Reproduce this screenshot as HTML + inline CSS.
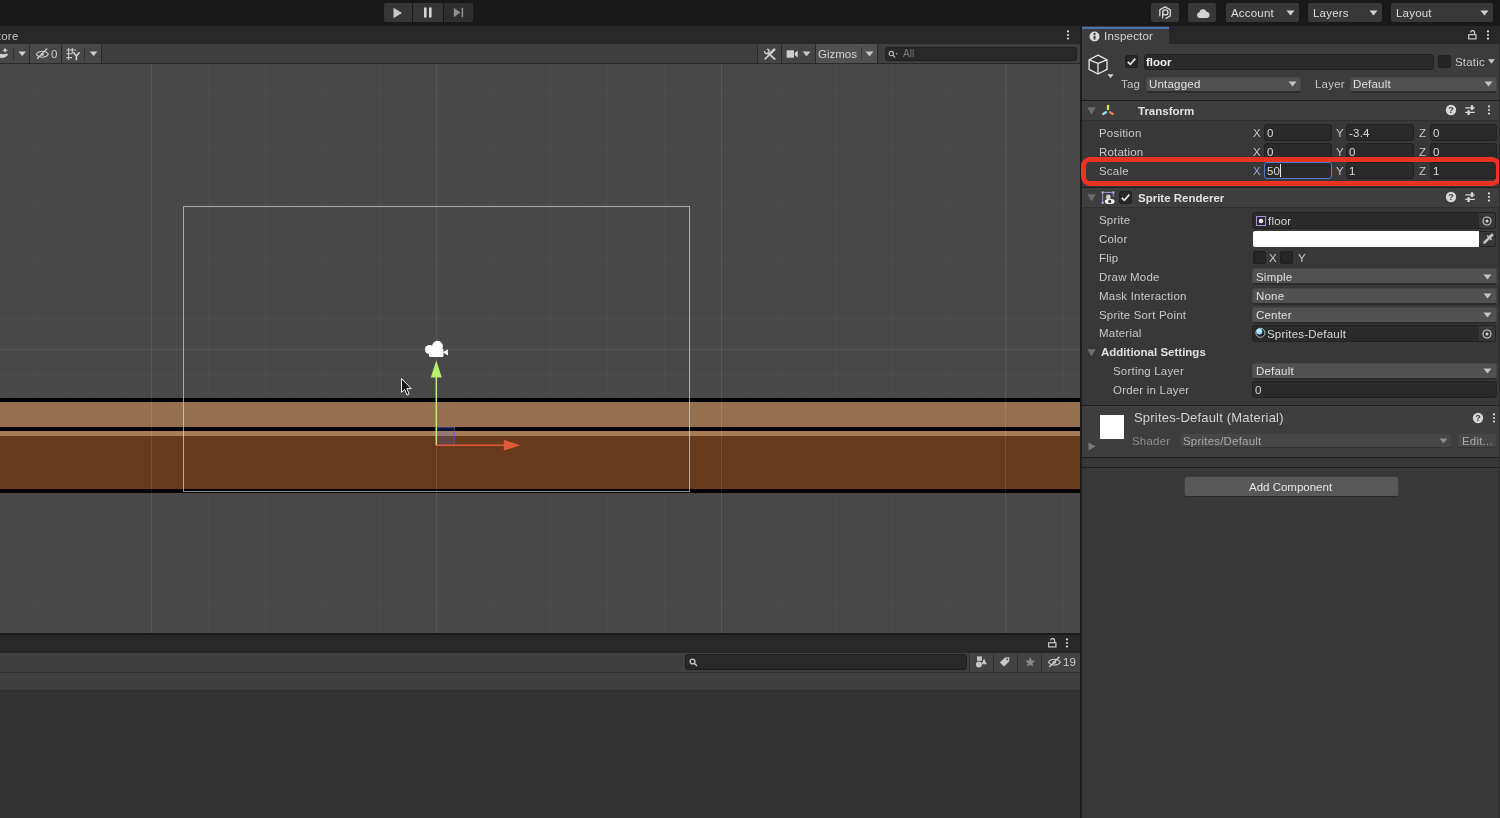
<!DOCTYPE html>
<html><head><meta charset="utf-8"><title>Unity - Inspector</title>
<style>
*{box-sizing:border-box;margin:0;padding:0}
html,body{width:1500px;height:818px;overflow:hidden;background:#191919}
body{position:relative;font-family:"Liberation Sans",sans-serif;font-size:12px;color:#d2d2d2;line-height:1}
.a{position:absolute}
.t{position:absolute;white-space:nowrap;line-height:14px;font-size:11.5px;letter-spacing:0.2px}
.fld{position:absolute;background:#2a2a2a;border:1px solid #212121;border-radius:3px}
.dd{position:absolute;background:#515151;border:1px solid #474747;border-bottom:2px solid #2c2c2c;border-radius:3px}
.btn{position:absolute;background:#383838;border-radius:2px}
svg{position:absolute;overflow:visible}
#root{position:absolute;left:0;top:0;width:1500px;height:818px;will-change:transform}
</style></head><body><div id="root">
<!-- TOPBAR -->
<div class="a" id="topbar" style="left:0;top:0;width:1500px;height:26px;background:#191919">
<div class="btn" style="left:384px;top:3px;width:28px;height:19px;background:#363636;border-radius:2px 0 0 2px"></div>
<div class="btn" style="left:413px;top:3px;width:30px;height:19px;background:#363636;border-radius:0"></div>
<div class="btn" style="left:444px;top:3px;width:29px;height:19px;background:#2e2e2e;border-radius:0 2px 2px 0"></div>
<svg style="left:392px;top:7px" width="12" height="12" viewBox="0 0 12 12"><path d="M1.5 0.8 L10 6 L1.5 11.2 Z" fill="#c8c8c8"/></svg>
<svg style="left:423px;top:7px" width="10" height="11" viewBox="0 0 10 11"><rect x="1" y="0.5" width="2.6" height="10" fill="#d4d4d4"/><rect x="6" y="0.5" width="2.6" height="10" fill="#d4d4d4"/></svg>
<svg style="left:453px;top:7px" width="12" height="11" viewBox="0 0 12 11"><path d="M0.8 0.8 L7.5 5.5 L0.8 10.2 Z" fill="#8e8e8e"/><rect x="8.6" y="0.8" width="1.5" height="9.4" fill="#8e8e8e"/></svg>
<div class="btn" style="left:1151px;top:3px;width:28px;height:19px"></div>
<div class="btn" style="left:1188px;top:3px;width:28px;height:19px"></div>
<div class="btn" style="left:1226px;top:3px;width:73px;height:19px"></div>
<div class="btn" style="left:1308px;top:3px;width:74px;height:19px"></div>
<div class="btn" style="left:1391px;top:3px;width:102px;height:19px"></div>
<div class="t" style="left:1231px;top:6px;color:#dcdcdc">Account</div>
<div class="t" style="left:1313px;top:6px;color:#dcdcdc">Layers</div>
<div class="t" style="left:1396px;top:6px;color:#dcdcdc">Layout</div>
<svg style="left:1286px;top:10px" width="9" height="6" viewBox="0 0 9 6"><path d="M0.5 0.5 H8.5 L4.5 5.5 Z" fill="#d0d0d0"/></svg>
<svg style="left:1369px;top:10px" width="9" height="6" viewBox="0 0 9 6"><path d="M0.5 0.5 H8.5 L4.5 5.5 Z" fill="#d0d0d0"/></svg>
<svg style="left:1480px;top:10px" width="9" height="6" viewBox="0 0 9 6"><path d="M0.5 0.5 H8.5 L4.5 5.5 Z" fill="#d0d0d0"/></svg>
<svg style="left:1157px;top:5px" width="16" height="16" viewBox="1157 5 16 16" fill="none" stroke="#d8d8d8" stroke-width="1.25" stroke-linejoin="round"><path d="M1159.8 16.2 V9.9 L1165 6.9 L1170.3 9.9 V15.9 L1165.6 18.6"/><circle cx="1165.3" cy="12.4" r="2.6"/><path d="M1162.7 12.4 V18.4"/></svg>
<svg style="left:1195.5px;top:8.6px" width="14.3" height="9.4" viewBox="0 1.5 16 10.5"><path d="M4 11.5 a3.2 3.2 0 0 1 -0.4 -6.3 a4.3 4.3 0 0 1 8.2 -0.6 a3.5 3.5 0 0 1 0.6 6.9 Z" fill="#d2d2d2"/></svg>
</div>
<!-- SCENE PANEL -->
<div class="a" id="scenetab" style="left:0;top:26px;width:1080px;height:18px;background:#282828"></div>
<div class="t" style="left:-10px;top:29px;color:#c4c4c4">Store</div>
<svg style="left:1065.6px;top:29.2px" width="4" height="12" viewBox="0 0 4 12" fill="#d6d6d6"><circle cx="2" cy="2.4" r="1.1"/><circle cx="2" cy="6" r="1.1"/><circle cx="2" cy="9.6" r="1.1"/></svg>
<div class="a" id="scenetool" style="left:0;top:44px;width:1080px;height:20px;background:#3e3e3e;border-bottom:1px solid #2a2a2a"></div>
<div class="a" style="left:0;top:44px;width:101px;height:19px;background:#484848"></div>
<div class="a" style="left:29px;top:44px;width:1px;height:19px;background:#2a2a2a"></div>
<div class="a" style="left:61px;top:44px;width:1px;height:19px;background:#2a2a2a"></div>
<div class="a" style="left:101px;top:44px;width:1px;height:19px;background:#2a2a2a"></div>
<svg style="left:0;top:44px" width="110" height="20" viewBox="0 44 110 20">
<path d="M13.5 48 V60 M84.5 48 V60" stroke="#333333" stroke-width="1" fill="none"/>
<path d="M5.1 47.4 L6 49.5 L8.1 50.3 L6 51.1 L5.1 53.2 L4.2 51.1 L2.1 50.3 L4.2 49.5 Z" fill="#d0d0d0"/>
<path d="M-2 52.8 C0.5 54.6 3.5 54.6 7.6 53.4 L7.6 55.6 C4 58.6 0.5 58.6 -2 57 Z" fill="#d0d0d0"/>
<path d="M18.4 51.5 H26 L22.2 55.9 Z M89.8 51.5 H97.4 L93.6 55.9 Z" fill="#d0d0d0"/>
<path d="M36.3 54.3 C38.8 50.2 45.8 50.2 48.4 54.3 C45.8 58.2 38.8 58.2 36.3 54.3 Z" fill="none" stroke="#cacaca" stroke-width="1.1"/>
<circle cx="42.3" cy="54.3" r="1.5" fill="#cacaca"/>
<path d="M37.2 58.8 L47.2 48.5" stroke="#cacaca" stroke-width="1.3" fill="none"/>
<path d="M66.3 50 H76 M66.3 53.8 H72.5 M66.3 57.6 H72 M68.6 48 V60 M72.3 48 V53" stroke="#cacaca" stroke-width="1.1" fill="none"/>
<path d="M73.3 52.2 L76.4 56 L79.5 52.2 M76.4 56 V60.2" stroke="#d6d6d6" stroke-width="1.5" fill="none"/>
</svg>
<div class="t" style="left:51px;top:47px;color:#cacaca">0</div>
<div class="a" style="left:757px;top:44px;width:58px;height:19px;background:#444444"></div>
<div class="a" style="left:815px;top:44px;width:62px;height:19px;background:#505050"></div>
<div class="a" style="left:757px;top:44px;width:1px;height:19px;background:#2a2a2a"></div>
<div class="a" style="left:781px;top:44px;width:1px;height:19px;background:#2a2a2a"></div>
<div class="a" style="left:815px;top:44px;width:1px;height:19px;background:#2a2a2a"></div>
<div class="a" style="left:877px;top:44px;width:1px;height:19px;background:#2a2a2a"></div>
<svg style="left:763px;top:47px" width="14" height="14" viewBox="763 47 14 14" fill="none" stroke="#cccccc" stroke-linecap="round"><path d="M768.2 53 L774.6 59" stroke-width="1.9"/><path d="M767.6 49.2 a2.3 2.3 0 1 1 -3 2.6" stroke-width="1.5"/><path d="M765.2 58.8 L770.6 53.4" stroke-width="1.7"/><path d="M771.2 52.6 L774.2 49.6" stroke-width="2.6"/></svg>
<svg style="left:786px;top:49px" width="13" height="10" viewBox="786 49 13 10" fill="#cccccc"><rect x="786.6" y="50.2" width="7.4" height="7.5" rx="0.7"/><path d="M794.8 52.7 L797.9 50.4 V57.5 L794.8 55.2 Z"/></svg>
<svg style="left:802px;top:51px" width="9" height="6" viewBox="0 0 9 6"><path d="M0.5 0.5 H8.5 L4.5 5.5 Z" fill="#c4c4c4"/></svg>
<div class="t" style="left:818px;top:47px;color:#d2d2d2;letter-spacing:0">Gizmos</div>
<div class="a" style="left:861px;top:47px;width:1px;height:13px;background:#3a3a3a"></div>
<svg style="left:865px;top:51px" width="9" height="6" viewBox="0 0 9 6"><path d="M0.5 0.5 H8.5 L4.5 5.5 Z" fill="#c4c4c4"/></svg>
<div class="a" style="left:885px;top:47px;width:192px;height:14px;background:#282828;border:1px solid #1f1f1f;border-radius:3px"></div>
<svg style="left:888px;top:50px" width="11" height="9" viewBox="0 0 11 9" fill="none" stroke="#b8b8b8" stroke-width="1.15"><circle cx="3.3" cy="3.5" r="2.2"/><path d="M5 5.2 L7.2 7.6"/><path d="M7.4 3.2 H10 L8.7 4.8 Z" fill="#b8b8b8" stroke="none"/></svg>
<div class="t" style="left:903px;top:47px;color:#7a7a7a;font-size:10px;letter-spacing:0">All</div>
<div class="a" id="scene" style="left:0;top:64px;width:1080px;height:569px;background:#484848;overflow:hidden"><div class="a" style="left:0;top:0;width:1080px;height:569px;background-image:repeating-linear-gradient(90deg,rgba(255,255,255,0.016) 0 1px,transparent 1px 28.5px),repeating-linear-gradient(0deg,rgba(255,255,255,0.016) 0 1px,transparent 1px 28.5px);background-position:8.5px 0,0 -0.5px"></div><div class="a" style="left:151px;top:0;width:1px;height:569px;background:rgba(255,255,255,0.07)"></div><div class="a" style="left:436px;top:0;width:1px;height:569px;background:rgba(255,255,255,0.07)"></div><div class="a" style="left:721px;top:0;width:1px;height:569px;background:rgba(255,255,255,0.07)"></div><div class="a" style="left:1005px;top:0;width:1px;height:569px;background:rgba(255,255,255,0.07)"></div><div class="a" style="left:0;top:285px;width:1080px;height:1px;background:rgba(255,255,255,0.07)"></div><div class="a" style="left:0;top:334px;width:1080px;height:4px;background:#000000"></div><div class="a" style="left:0;top:338px;width:1080px;height:25px;background:#94704e"></div><div class="a" style="left:0;top:363px;width:1080px;height:4px;background:#000000"></div><div class="a" style="left:0;top:367px;width:1080px;height:5px;background:#a47c56"></div><div class="a" style="left:0;top:372px;width:1080px;height:53px;background:#673a1c"></div><div class="a" style="left:0;top:425px;width:1080px;height:3.5px;background:#000000"></div><div class="a" style="left:151px;top:334px;width:1px;height:95px;background:rgba(255,255,255,0.10)"></div><div class="a" style="left:436px;top:334px;width:1px;height:95px;background:rgba(255,255,255,0.10)"></div><div class="a" style="left:721px;top:334px;width:1px;height:95px;background:rgba(255,255,255,0.10)"></div><div class="a" style="left:1005px;top:334px;width:1px;height:95px;background:rgba(255,255,255,0.10)"></div><div class="a" style="left:183px;top:142px;width:507px;height:286px;border:1px solid rgba(230,230,230,0.62)"></div><div class="a" style="left:437px;top:363px;width:18px;height:18px;background:rgba(90,100,220,0.22);border:1px solid rgba(80,90,200,0.55);border-left:none;border-bottom:none"></div><svg style="left:0;top:0" width="1080" height="569" viewBox="0 64 1080 569"><path d="M436.3 445.5 V376" stroke="#bcf06c" stroke-width="1.5" fill="none"/><path d="M436.3 360.5 L441.8 377.5 H430.8 Z" fill="#b8ee6c"/><path d="M436 445.3 H504" stroke="#e25a3a" stroke-width="1.6" fill="none"/><path d="M520.5 445.2 L503.8 450.6 V439.8 Z" fill="#e25a3a"/><g fill="#ffffff"><circle cx="429.5" cy="349.5" r="4.6"/><circle cx="437.5" cy="346.2" r="5.4"/><rect x="429" y="348.5" width="14.5" height="8.6" rx="1.5"/><path d="M443 352.3 L447.9 349.2 V355.6 Z"/></g><path d="M401.5 378.5 V392.3 L404.6 389.4 L407 395 L409.2 394 L406.8 388.6 H411.2 Z" fill="#1a1a1a" stroke="#f0f0f0" stroke-width="1" stroke-linejoin="round"/></svg></div>
<div class="a" style="left:0;top:633px;width:1080px;height:2px;background:#191919"></div>
<div class="a" id="bottab" style="left:0;top:635px;width:1080px;height:18px;background:#282828"></div>
<svg style="left:1047.6px;top:638.3px" width="8.6" height="9.6" viewBox="0 0 9 10" fill="none" stroke="#d2d2d2" stroke-width="1.2"><rect x="0.7" y="4.9" width="7.6" height="4.4"/><path d="M6.9 4.9 V2.9 a2.1 2.1 0 0 0 -4.2 -0.3"/></svg>
<svg style="left:1065.4px;top:637.4px" width="4" height="12" viewBox="0 0 4 12" fill="#d6d6d6"><circle cx="2" cy="2.4" r="1.1"/><circle cx="2" cy="6" r="1.1"/><circle cx="2" cy="9.6" r="1.1"/></svg>
<div class="a" id="bottool" style="left:0;top:653px;width:1080px;height:19px;background:#3f3f3f"></div>
<div class="a" style="left:685px;top:654px;width:282px;height:16px;background:#282828;border:1px solid #1f1f1f;border-radius:3px"></div>
<svg style="left:689px;top:658px" width="9" height="9" viewBox="0 0 9 9" fill="none" stroke="#c8c8c8" stroke-width="1.4"><circle cx="3.5" cy="3.5" r="2.4"/><path d="M5.3 5.3 L8 8"/></svg>
<div class="a" style="left:969px;top:653px;width:111px;height:19px;background:#434343"></div>
<svg style="left:960px;top:653px" width="120" height="19" viewBox="960 653 120 19">
<path d="M969.5 653 V672 M993.5 653 V672 M1017.5 653 V672 M1041.5 653 V672" stroke="#303030" stroke-width="1" fill="none"/>
<rect x="977" y="656.4" width="4.9" height="4.4" fill="#c6c6c6"/><circle cx="978.9" cy="664.5" r="3" fill="#c6c6c6"/><path d="M984 658.6 L986.8 664.2 H981.4 Z" fill="#c6c6c6"/>
<path d="M999.8 662.6 L1005 657.6 L1009.4 657.2 L1009.2 661.4 L1004 666.4 Z" fill="#c6c6c6"/><circle cx="1007.3" cy="659.3" r="0.9" fill="#434343"/>
<path d="M1030.2 657 L1031.7 660.4 L1035.2 660.7 L1032.5 663.1 L1033.3 666.6 L1030.2 664.8 L1027.1 666.6 L1027.9 663.1 L1025.2 660.7 L1028.7 660.4 Z" fill="#8a8a8a"/>
<path d="M1048.4 662.2 C1050.9 658.2 1057.9 658.2 1060.4 662.2 C1057.9 666 1050.9 666 1048.4 662.2 Z" fill="none" stroke="#cacaca" stroke-width="1.1"/><circle cx="1054.4" cy="662.2" r="1.5" fill="#cacaca"/><path d="M1049.2 667 L1059.4 656.8" stroke="#cacaca" stroke-width="1.3" fill="none"/>
</svg>
<div class="t" style="left:1063px;top:655px;color:#cacaca">19</div>
<div class="a" id="botbar" style="left:0;top:672px;width:1080px;height:19px;background:#3f3f3f;border-top:1px solid #303030;border-bottom:1px solid #2c2c2c"></div>
<div class="a" id="botcontent" style="left:0;top:691px;width:1080px;height:127px;background:#333333"></div>
<!-- INSPECTOR -->
<div class="a" style="left:1080px;top:26px;width:2px;height:792px;background:#1c1c1c"></div>
<div class="a" id="insptab" style="left:1082px;top:26px;width:418px;height:18px;background:#282828"></div>
<div class="a" style="left:1082px;top:26px;width:87px;height:18px;background:#3c3c3c"></div><div class="a" style="left:1082px;top:27px;width:87px;height:2px;background:#4a76ad"></div>
<svg style="left:1089px;top:31px" width="11" height="11" viewBox="0 0 11 11"><circle cx="5.5" cy="5.5" r="5" fill="#dcdcdc"/><rect x="4.6" y="4.6" width="1.9" height="4" fill="#3c3c3c"/><circle cx="5.5" cy="2.9" r="1.1" fill="#3c3c3c"/></svg>
<div class="t" style="left:1104px;top:29px;color:#d6d6d6">Inspector</div>
<svg style="left:1467.6px;top:30.2px" width="8.6" height="9.6" viewBox="0 0 9 10" fill="none" stroke="#d2d2d2" stroke-width="1.2"><rect x="0.7" y="4.9" width="7.6" height="4.4"/><path d="M6.9 4.9 V2.9 a2.1 2.1 0 0 0 -4.2 -0.3"/></svg>
<svg style="left:1485.8px;top:29.2px" width="4" height="12" viewBox="0 0 4 12" fill="#d6d6d6"><circle cx="2" cy="2.4" r="1.1"/><circle cx="2" cy="6" r="1.1"/><circle cx="2" cy="9.6" r="1.1"/></svg>
<div class="a" id="insp" style="left:1082px;top:44px;width:418px;height:774px;background:#383838"></div>
<div class="a" style="left:1082px;top:44px;width:418px;height:56px;background:#3c3c3c"></div>
<svg style="left:1088px;top:54px" width="20" height="21" viewBox="1088 54 20 21" fill="rgba(0,0,0,0.16)" stroke="#e4e4e4" stroke-width="1.35" stroke-linejoin="round"><path d="M1098 55.2 L1107 59.9 V69.4 L1098 74 L1089.1 69.4 V59.9 Z"/><path d="M1089.1 59.9 L1098 63.3 L1107 59.9 M1098 63.3 V74" fill="none"/></svg>
<svg style="left:1106.6px;top:73.6px" width="7" height="4.4" viewBox="0 0 7 5"><path d="M0 0.3 H7 L3.5 4.7 Z" fill="#d0d0d0"/></svg>
<div class="a" style="left:1125px;top:55px;width:13px;height:13px;background:#262626;border:1px solid #1f1f1f;border-radius:2px"></div><svg style="left:1125px;top:55px" width="13" height="13" viewBox="0 0 13 13" fill="none" stroke="#e6e6e6" stroke-width="1.7"><path d="M2.8 6.8 L5.3 9.3 L10.3 3.6"/></svg>
<div class="fld" style="left:1144px;top:54px;width:290px;height:16px"></div>
<div class="t" style="left:1146px;top:55px;color:#f0f0f0;font-weight:bold;letter-spacing:0">floor</div>
<div class="a" style="left:1438px;top:55px;width:13px;height:13px;background:#262626;border:1px solid #1f1f1f;border-radius:2px"></div>
<div class="t" style="left:1455px;top:55px;color:#c8c8c8">Static</div>
<svg style="left:1488px;top:59px" width="7" height="5" viewBox="0 0 7 5"><path d="M0 0.3 H7 L3.5 4.7 Z" fill="#c8c8c8"/></svg>
<div class="t" style="left:1121px;top:77px;color:#c4c4c4">Tag</div>
<div class="dd" style="left:1146px;top:77px;width:155px;height:16px"></div>
<div class="t" style="left:1149px;top:77px;color:#e0e0e0">Untagged</div>
<svg style="left:1288px;top:81px" width="9" height="6" viewBox="0 0 9 6"><path d="M0.5 0.5 H8.5 L4.5 5.5 Z" fill="#c4c4c4"/></svg>
<div class="t" style="left:1315px;top:77px;color:#c4c4c4">Layer</div>
<div class="dd" style="left:1350px;top:77px;width:147px;height:16px"></div>
<div class="t" style="left:1353px;top:77px;color:#e0e0e0">Default</div>
<svg style="left:1484px;top:81px" width="9" height="6" viewBox="0 0 9 6"><path d="M0.5 0.5 H8.5 L4.5 5.5 Z" fill="#c4c4c4"/></svg>
<div class="a" style="left:1082px;top:100px;width:418px;height:21px;background:#3e3e3e;border-top:1px solid #1f1f1f;border-bottom:1px solid #303030"></div><svg style="left:1086.5px;top:106.5px" width="9" height="8" viewBox="0 0 9 8"><path d="M0.2 0.3 H8.8 L4.5 7.5 Z" fill="#6c6c6c"/></svg><div class="t" style="left:1138px;top:104px;font-weight:bold;color:#e0e0e0;font-size:11.5px;letter-spacing:0">Transform</div><svg style="left:1445px;top:104px" width="12" height="12" viewBox="0 0 12 12"><circle cx="6" cy="6" r="5.2" fill="#d6d6d6"/><text x="6" y="9.3" text-anchor="middle" font-family="Liberation Sans,sans-serif" font-weight="bold" font-size="9" fill="#3e3e3e">?</text></svg><svg style="left:1464px;top:104px" width="12" height="12" viewBox="0 0 12 12" stroke="#d4d4d4" fill="none"><path d="M1.2 3.8 H10.8 M1.2 8.3 H10.8" stroke-width="1.2"/><path d="M8 1.3 V6 M4.6 6.2 V10.9" stroke-width="2.4"/></svg><svg style="left:1487px;top:104px" width="4" height="12" viewBox="0 0 4 12" fill="#d6d6d6"><circle cx="2" cy="2.4" r="1.1"/><circle cx="2" cy="6" r="1.1"/><circle cx="2" cy="9.6" r="1.1"/></svg>
<svg style="left:1101px;top:104px" width="14" height="12" viewBox="0 0 14 12" stroke-width="2.3" stroke-linecap="round" fill="none"><path d="M7 1.8 V5.2" stroke="#d6e65c"/><path d="M5 8.2 L2.2 10" stroke="#92e0f4"/><path d="M9 8.2 L11.8 10" stroke="#ea8048"/></svg>
<div class="t" style="left:1099px;top:126px;color:#c8c8c8;">Position</div>
<div class="t" style="left:1253px;top:126px;color:#c4c4c4">X</div><div class="fld" style="left:1264px;top:124px;width:68px;height:17px;"></div><div class="t" style="left:1267px;top:126px;color:#d8d8d8">0</div><div class="t" style="left:1336px;top:126px;color:#c4c4c4">Y</div><div class="fld" style="left:1346px;top:124px;width:68px;height:17px;"></div><div class="t" style="left:1349px;top:126px;color:#d8d8d8">-3.4</div><div class="t" style="left:1419px;top:126px;color:#c4c4c4">Z</div><div class="fld" style="left:1430px;top:124px;width:67px;height:17px;"></div><div class="t" style="left:1433px;top:126px;color:#d8d8d8">0</div>
<div class="t" style="left:1099px;top:145px;color:#c8c8c8;">Rotation</div>
<div class="t" style="left:1253px;top:145px;color:#c4c4c4">X</div><div class="fld" style="left:1264px;top:143px;width:68px;height:17px;"></div><div class="t" style="left:1267px;top:145px;color:#d8d8d8">0</div><div class="t" style="left:1336px;top:145px;color:#c4c4c4">Y</div><div class="fld" style="left:1346px;top:143px;width:68px;height:17px;"></div><div class="t" style="left:1349px;top:145px;color:#d8d8d8">0</div><div class="t" style="left:1419px;top:145px;color:#c4c4c4">Z</div><div class="fld" style="left:1430px;top:143px;width:67px;height:17px;"></div><div class="t" style="left:1433px;top:145px;color:#d8d8d8">0</div>
<div class="t" style="left:1099px;top:164px;color:#c8c8c8;">Scale</div>
<div class="t" style="left:1253px;top:164px;color:#8ea8e8">X</div><div class="fld" style="left:1264px;top:162px;width:68px;height:17px;border-color:#4f7fd2;"></div><div class="t" style="left:1267px;top:164px;color:#d8d8d8">50</div><div class="t" style="left:1336px;top:164px;color:#c4c4c4">Y</div><div class="fld" style="left:1346px;top:162px;width:68px;height:17px;"></div><div class="t" style="left:1349px;top:164px;color:#d8d8d8">1</div><div class="t" style="left:1419px;top:164px;color:#c4c4c4">Z</div><div class="fld" style="left:1430px;top:162px;width:67px;height:17px;"></div><div class="t" style="left:1433px;top:164px;color:#d8d8d8">1</div>
<div class="a" style="left:1280px;top:164px;width:1px;height:13px;background:#e8e8e8"></div>
<div class="a" id="redbox" style="left:1081px;top:157px;width:420px;height:29px;border:5px solid #ea3323;border-radius:9px"></div>
<div class="a" style="left:1082px;top:187px;width:418px;height:21px;background:#3e3e3e;border-top:1px solid #1f1f1f;border-bottom:1px solid #303030"></div><svg style="left:1086.5px;top:193.5px" width="9" height="8" viewBox="0 0 9 8"><path d="M0.2 0.3 H8.8 L4.5 7.5 Z" fill="#6c6c6c"/></svg><div class="t" style="left:1138px;top:191px;font-weight:bold;color:#e0e0e0;font-size:11.5px;letter-spacing:0">Sprite Renderer</div><svg style="left:1445px;top:191px" width="12" height="12" viewBox="0 0 12 12"><circle cx="6" cy="6" r="5.2" fill="#d6d6d6"/><text x="6" y="9.3" text-anchor="middle" font-family="Liberation Sans,sans-serif" font-weight="bold" font-size="9" fill="#3e3e3e">?</text></svg><svg style="left:1464px;top:191px" width="12" height="12" viewBox="0 0 12 12" stroke="#d4d4d4" fill="none"><path d="M1.2 3.8 H10.8 M1.2 8.3 H10.8" stroke-width="1.2"/><path d="M8 1.3 V6 M4.6 6.2 V10.9" stroke-width="2.4"/></svg><svg style="left:1487px;top:191px" width="4" height="12" viewBox="0 0 4 12" fill="#d6d6d6"><circle cx="2" cy="2.4" r="1.1"/><circle cx="2" cy="6" r="1.1"/><circle cx="2" cy="9.6" r="1.1"/></svg>
<svg style="left:1101px;top:191px" width="14" height="14" viewBox="0 0 14 14" fill="none"><path d="M1.7 11.7 V1.4 H12.3 V5.5" stroke="#a48ee0" stroke-width="1"/><circle cx="1.7" cy="1.4" r="1.25" fill="#b49ef0"/><circle cx="12.3" cy="1.4" r="1.25" fill="#b49ef0"/><circle cx="1.7" cy="11.7" r="1.25" fill="#b49ef0"/><circle cx="7.3" cy="6" r="2.4" fill="#cfcfcf"/><ellipse cx="8.7" cy="10.4" rx="4.9" ry="2.6" fill="#f0f0f0"/><circle cx="8.7" cy="10.4" r="1.55" fill="#333"/></svg>
<div class="a" style="left:1119px;top:191px;width:13px;height:13px;background:#262626;border:1px solid #1f1f1f;border-radius:2px"></div><svg style="left:1119px;top:191px" width="13" height="13" viewBox="0 0 13 13" fill="none" stroke="#e6e6e6" stroke-width="1.7"><path d="M2.8 6.8 L5.3 9.3 L10.3 3.6"/></svg>
<div class="t" style="left:1099px;top:213px;color:#c8c8c8;">Sprite</div>
<div class="fld" style="left:1252px;top:212px;width:228px;height:17px;border-radius:3px 0 0 3px"></div>
<div class="a" style="left:1479px;top:212px;width:17px;height:17px;background:#383838;border-radius:0 3px 3px 0;border:1px solid #212121;border-left:none"></div><svg style="left:1482px;top:215.5px" width="10" height="10" viewBox="0 0 10 10"><circle cx="5" cy="5" r="4" fill="none" stroke="#d0d0d0" stroke-width="1.1"/><circle cx="5" cy="5" r="1.5" fill="#d0d0d0"/></svg>
<svg style="left:1256px;top:216px" width="10" height="10" viewBox="0 0 10 10"><rect x="0.5" y="0.5" width="9" height="9" fill="none" stroke="#a890e0" stroke-width="1"/><circle cx="5" cy="5" r="2.3" fill="#e4e4e4"/></svg>
<div class="t" style="left:1268px;top:214px;color:#d8d8d8;">floor</div>
<div class="t" style="left:1099px;top:232px;color:#c8c8c8;">Color</div>
<div class="a" style="left:1253px;top:231px;width:226px;height:16px;background:#ffffff;border-radius:2px 0 0 2px"></div>
<div class="a" style="left:1479px;top:231px;width:17px;height:16px;background:#383838;border:1px solid #262626;border-left:none;border-radius:0 3px 3px 0"></div>
<svg style="left:1482px;top:233px" width="12" height="12" viewBox="0 0 12 12"><path d="M1 11 L1.6 8.6 L6.2 4 L8 5.8 L3.4 10.4 Z" fill="#c4c4c4"/><path d="M5.6 3 L9 6.4" stroke="#c4c4c4" stroke-width="1.6" stroke-linecap="round"/><path d="M8 4 L10 2" stroke="#c4c4c4" stroke-width="2.8" stroke-linecap="round"/></svg>
<div class="t" style="left:1099px;top:251px;color:#c8c8c8;">Flip</div>
<div class="a" style="left:1253px;top:251px;width:13px;height:13px;background:#262626;border:1px solid #1f1f1f;border-radius:2px"></div>
<div class="t" style="left:1269px;top:251px;color:#c8c8c8;">X</div>
<div class="a" style="left:1280px;top:251px;width:13px;height:13px;background:#262626;border:1px solid #1f1f1f;border-radius:2px"></div>
<div class="t" style="left:1298px;top:251px;color:#c8c8c8;">Y</div>
<div class="t" style="left:1099px;top:270px;color:#c8c8c8;">Draw Mode</div>
<div class="dd" style="left:1252px;top:268px;width:245px;height:17px"></div><div class="t" style="left:1256px;top:270px;color:#e0e0e0;">Simple</div><svg style="left:1483px;top:274px" width="9" height="6" viewBox="0 0 9 6"><path d="M0.5 0.5 H8.5 L4.5 5.5 Z" fill="#c4c4c4"/></svg>
<div class="t" style="left:1099px;top:289px;color:#c8c8c8;">Mask Interaction</div>
<div class="dd" style="left:1252px;top:288px;width:245px;height:17px"></div><div class="t" style="left:1256px;top:289px;color:#e0e0e0;">None</div><svg style="left:1483px;top:293px" width="9" height="6" viewBox="0 0 9 6"><path d="M0.5 0.5 H8.5 L4.5 5.5 Z" fill="#c4c4c4"/></svg>
<div class="t" style="left:1099px;top:308px;color:#c8c8c8;">Sprite Sort Point</div>
<div class="dd" style="left:1252px;top:307px;width:245px;height:17px"></div><div class="t" style="left:1256px;top:308px;color:#e0e0e0;">Center</div><svg style="left:1483px;top:312px" width="9" height="6" viewBox="0 0 9 6"><path d="M0.5 0.5 H8.5 L4.5 5.5 Z" fill="#c4c4c4"/></svg>
<div class="t" style="left:1099px;top:326px;color:#c8c8c8;">Material</div>
<div class="fld" style="left:1252px;top:325px;width:228px;height:17px;border-radius:3px 0 0 3px"></div>
<div class="a" style="left:1479px;top:325px;width:17px;height:17px;background:#383838;border-radius:0 3px 3px 0;border:1px solid #212121;border-left:none"></div><svg style="left:1482px;top:328.5px" width="10" height="10" viewBox="0 0 10 10"><circle cx="5" cy="5" r="4" fill="none" stroke="#d0d0d0" stroke-width="1.1"/><circle cx="5" cy="5" r="1.5" fill="#d0d0d0"/></svg>
<svg style="left:1255px;top:327px" width="11" height="12" viewBox="1255 327 11 12"><circle cx="1260.4" cy="332.8" r="4.5" fill="#1c1c1c" stroke="#b4dce6" stroke-width="0.9"/><circle cx="1259.4" cy="331.5" r="3" fill="#9adcff"/><circle cx="1258.8" cy="330.8" r="1.5" fill="#c4ecff"/></svg>
<div class="t" style="left:1267px;top:327px;color:#d8d8d8;">Sprites-Default</div>
<svg style="left:1086.5px;top:348.5px" width="9" height="8" viewBox="0 0 9 8"><path d="M0.2 0.3 H8.8 L4.5 7.5 Z" fill="#6c6c6c"/></svg>
<div class="t" style="left:1101px;top:345px;color:#e0e0e0;font-weight:bold;font-size:11.5px;letter-spacing:0">Additional Settings</div>
<div class="t" style="left:1113px;top:364px;color:#c8c8c8;">Sorting Layer</div>
<div class="dd" style="left:1252px;top:363px;width:245px;height:17px"></div><div class="t" style="left:1256px;top:364px;color:#e0e0e0;">Default</div><svg style="left:1483px;top:368px" width="9" height="6" viewBox="0 0 9 6"><path d="M0.5 0.5 H8.5 L4.5 5.5 Z" fill="#c4c4c4"/></svg>
<div class="t" style="left:1113px;top:383px;color:#c8c8c8;">Order in Layer</div>
<div class="fld" style="left:1252px;top:381px;width:245px;height:17px"></div>
<div class="t" style="left:1255px;top:383px;color:#d8d8d8;">0</div>
<div class="a" style="left:1082px;top:405px;width:418px;height:53px;background:#3e3e3e;border-top:1px solid #1f1f1f;border-bottom:1px solid #1f1f1f"></div>
<div class="a" style="left:1082px;top:467px;width:418px;height:1px;background:#1f1f1f"></div>
<div class="a" style="left:1100px;top:415px;width:24px;height:24px;background:#ffffff"></div>
<div class="t" style="left:1134px;top:411px;color:#d2d2d2;font-size:13px">Sprites-Default (Material)</div>
<svg style="left:1472px;top:412px" width="12" height="12" viewBox="0 0 12 12"><circle cx="6" cy="6" r="5.2" fill="#d6d6d6"/><text x="6" y="9.3" text-anchor="middle" font-family="Liberation Sans,sans-serif" font-weight="bold" font-size="9" fill="#3e3e3e">?</text></svg>
<svg style="left:1492px;top:412px" width="4" height="12" viewBox="0 0 4 12" fill="#d6d6d6"><circle cx="2" cy="2.4" r="1.1"/><circle cx="2" cy="6" r="1.1"/><circle cx="2" cy="9.6" r="1.1"/></svg>
<svg style="left:1088px;top:442px" width="8" height="9" viewBox="0 0 8 9"><path d="M0.5 0.5 L7.5 4.5 L0.5 8.5 Z" fill="#7a7a7a"/></svg>
<div class="t" style="left:1132px;top:434px;color:#8e8e8e;">Shader</div>
<div class="dd" style="left:1180px;top:433px;width:272px;height:15px;background:#474747;border:1px solid #3f3f3f;border-bottom-color:#343434"></div>
<div class="t" style="left:1183px;top:434px;color:#a8a8a8;">Sprites/Default</div>
<svg style="left:1439px;top:438px" width="9" height="6" viewBox="0 0 9 6"><path d="M0.5 0.5 H8.5 L4.5 5.5 Z" fill="#8a8a8a"/></svg>
<div class="dd" style="left:1457px;top:433px;width:40px;height:15px;background:#474747;border:1px solid #3f3f3f;border-bottom-color:#343434"></div>
<div class="t" style="left:1462px;top:434px;color:#a8a8a8;">Edit...</div>
<div class="a" style="left:1184px;top:476px;width:215px;height:21px;background:#585858;border:1px solid #404040;border-bottom-color:#282828;border-radius:3px"></div>
<div class="t" style="left:1249px;top:480px;color:#e4e4e4;letter-spacing:0">Add Component</div>
<div class="a" style="left:1499px;top:44px;width:1px;height:774px;background:#2c2c2c"></div>
</div></body></html>
